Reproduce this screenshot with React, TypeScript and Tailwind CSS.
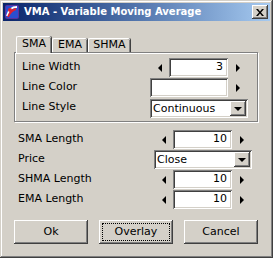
import React from 'react';

const raised =
  'shadow-[inset_-1px_-1px_0_#404040,inset_1px_1px_0_#ffffff,inset_-2px_-2px_0_#808080,inset_2px_2px_0_#d4d0c8]';
const sunken =
  'shadow-[inset_1px_1px_0_#808080,inset_-1px_-1px_0_#ffffff,inset_2px_2px_0_#404040,inset_-2px_-2px_0_#d4d0c8]';

function ArrowLeft() {
  return <span className="block w-0 h-0 border-y-[4px] border-y-transparent border-r-[4px] border-r-black" />;
}

function ArrowRight() {
  return <span className="block w-0 h-0 border-y-[4px] border-y-transparent border-l-[4px] border-l-black" />;
}

function Spinner({ value }: { value: string }) {
  return (
    <div className="flex h-[19px] w-[98px]">
      <div className="w-[19px] flex items-center justify-center pl-[1px]">
        <ArrowLeft />
      </div>
      <div className={`w-[59px] bg-white flex items-center justify-end pr-[5px] ${sunken}`}>{value}</div>
      <div className="w-[20px] flex items-center justify-center">
        <ArrowRight />
      </div>
    </div>
  );
}

function ColorPick() {
  return (
    <div className="flex h-[19px] w-[98px]">
      <div className={`w-[78px] bg-white ${sunken}`} />
      <div className="w-[20px] flex items-center justify-center">
        <ArrowRight />
      </div>
    </div>
  );
}

function Combo({ value }: { value: string }) {
  return (
    <div className={`flex h-[19px] w-[98px] bg-white p-[2px] ${sunken}`}>
      <div className="flex-1 flex items-center pl-[1px] leading-none">{value}</div>
      <div className={`w-[16px] bg-[#d4d0c8] flex items-center justify-center ${raised}`}>
        <span className="block w-0 h-0 border-x-[4px] border-x-transparent border-t-[4px] border-t-black" />
      </div>
    </div>
  );
}

function Row({ label, children }: { label: string; children: React.ReactNode }) {
  return (
    <div className="flex h-[20px] justify-between">
      <div className="h-[19px] flex items-center">{label}</div>
      {children}
    </div>
  );
}

function Button({ label, focused }: { label: string; focused?: boolean }) {
  return (
    <div className={`w-[74px] h-[24px] p-[4px] ${raised}`}>
      <div
        className={`w-full h-full flex items-center justify-center ${focused ? 'outline-1 outline-dotted outline-black' : ''}`}
      >
        {label}
      </div>
    </div>
  );
}

function AppIcon() {
  return (
    <svg width="16" height="16" viewBox="0 0 16 16">
      <rect x="1" y="1" width="14" height="14" rx="2" fill="#5a2fa0" />
      <rect x="2" y="2" width="12" height="12" rx="1" fill="#2a4fd0" />
      <path d="M3 12 C5 4, 9 3, 13 3" stroke="#ffffff" strokeWidth="2" fill="none" />
      <path d="M4 13 C6 8, 8 6, 12 5" stroke="#e02030" strokeWidth="2" fill="none" />
      <circle cx="6" cy="6" r="2" fill="#e02030" />
    </svg>
  );
}

export default function App() {
  return (
    <div
      className="w-[273px] h-[258px] bg-[#d4d0c8] p-[3px] flex flex-col text-[11px] text-black shadow-[inset_-1px_-1px_0_#404040,inset_1px_1px_0_#d4d0c8,inset_-2px_-2px_0_#808080,inset_2px_2px_0_#ffffff]"
      style={{ fontFamily: '"DejaVu Sans", sans-serif' }}
    >
      <div className="h-[18px] flex items-center bg-gradient-to-r from-[#0a246a] to-[#a6caf0] pl-[1px] pr-[2px]">
        <AppIcon />
        <span className="ml-[4px] text-white font-bold text-[10px] flex-1 leading-none">
          VMA - Variable Moving Average
        </span>
        <div className={`w-[16px] h-[14px] bg-[#d4d0c8] flex items-center justify-center ${raised}`}>
          <svg width="8" height="7" viewBox="0 0 8 7">
            <path d="M0 0h2l2 2.5L6 0h2L5 3.5 8 7H6L4 4.5 2 7H0l3-3.5z" fill="#000" />
          </svg>
        </div>
      </div>

      <div className="flex flex-col px-[11px] pt-[15px]">
        <div className="flex items-end h-[16px] pl-[2px] relative z-10">
          <div className="w-[35px] h-[17px] -mb-[1px] bg-[#d4d0c8] border-l border-t border-white rounded-tl-[2px] rounded-tr-[2px] shadow-[inset_-1px_0_0_#808080,1px_0_0_#404040] flex items-center justify-center pb-[1px]">
            SMA
          </div>
          <div className="w-[35px] h-[14px] ml-[1px] border-l border-t border-white rounded-tl-[2px] rounded-tr-[2px] shadow-[inset_-1px_0_0_#808080,1px_0_0_#404040] flex items-center justify-center">
            EMA
          </div>
          <div className="w-[42px] h-[14px] ml-[1px] border-l border-t border-white rounded-tl-[2px] rounded-tr-[2px] shadow-[inset_-1px_0_0_#808080,1px_0_0_#404040] flex items-center justify-center">
            SHMA
          </div>
        </div>

        <div className="w-[244px] h-[70px] border border-[#808080] shadow-[inset_1px_1px_0_#ffffff,1px_1px_0_#ffffff] pt-[5px] pl-[7px] pr-[9px]">
          <Row label="Line Width">
            <Spinner value="3" />
          </Row>
          <Row label="Line Color">
            <ColorPick />
          </Row>
          <Row label="Line Style">
            <div className="h-[19px] pt-[1px]">
              <Combo value="Continuous" />
            </div>
          </Row>
        </div>

        <div className="mt-[8px] pl-[4px] pr-[7px]">
          <Row label="SMA Length">
            <Spinner value="10" />
          </Row>
          <Row label="Price">
            <Combo value="Close" />
          </Row>
          <Row label="SHMA Length">
            <Spinner value="10" />
          </Row>
          <Row label="EMA Length">
            <Spinner value="10" />
          </Row>
        </div>

        <div className="mt-[10px] flex gap-[11px]">
          <Button label="Ok" />
          <Button label="Overlay" focused />
          <Button label="Cancel" />
        </div>
      </div>
    </div>
  );
}
